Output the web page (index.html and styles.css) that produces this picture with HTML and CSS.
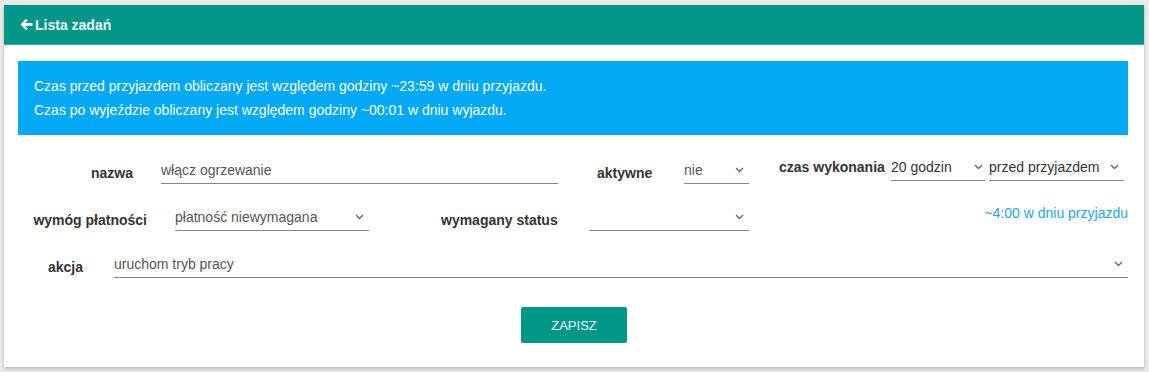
FILE: index.html
```html
<!DOCTYPE html>
<html lang="pl">
<head>
    <meta charset="UTF-8">
    <title>Lista zadań - edycja</title>
    <meta name="viewport" content="width=device-width, initial-scale=1.0">
    <link rel="stylesheet" href="styles.css">
</head>
<body>
    <div class="card">
        <div class="card-head">
            <svg class="back-icon" width="13" height="13" viewBox="0 0 14 14">
                <path d="M6.4 0.8 L8.3 2.7 L5.6 5.4 H13.4 V8.6 H5.6 L8.3 11.3 L6.4 13.2 L0.6 7 Z" fill="currentColor"/>
            </svg>
            <span>Lista zadań</span>
        </div>
        <div class="card-body">
            <div class="info">
                <p>Czas przed przyjazdem obliczany jest względem godziny ~23:59 w dniu przyjazdu.</p>
                <p>Czas po wyjeździe obliczany jest względem godziny ~00:01 w dniu wyjazdu.</p>
            </div>

            <form class="task-form">
                <div class="row row-first">
                    <div class="field f-name">
                        <label class="label lbl-name">nazwa</label>
                        <div class="input">włącz ogrzewanie</div>
                    </div>
                    <div class="field f-active">
                        <label class="label">aktywne</label>
                        <div class="select sel-active">
                            <span>nie</span>
                            <svg class="chev" width="9" height="6" viewBox="0 0 9 6"><path d="M1 1 L4.5 4.5 L8 1" fill="none" stroke="currentColor" stroke-width="1.4"/></svg>
                        </div>
                    </div>
                    <div class="field f-time">
                        <label class="label label-tall">czas wykonania</label>
                        <div class="select sel-hours dark">
                            <span>20 godzin</span>
                            <svg class="chev" width="9" height="6" viewBox="0 0 9 6"><path d="M1 1 L4.5 4.5 L8 1" fill="none" stroke="currentColor" stroke-width="1.4"/></svg>
                        </div>
                        <div class="select sel-when dark">
                            <span>przed przyjazdem</span>
                            <svg class="chev" width="9" height="6" viewBox="0 0 9 6"><path d="M1 1 L4.5 4.5 L8 1" fill="none" stroke="currentColor" stroke-width="1.4"/></svg>
                        </div>
                    </div>
                </div>

                <div class="row">
                    <div class="field">
                        <label class="label lbl-pay">wymóg płatności</label>
                        <div class="select sel-pay">
                            <span>płatność niewymagana</span>
                            <svg class="chev" width="9" height="6" viewBox="0 0 9 6"><path d="M1 1 L4.5 4.5 L8 1" fill="none" stroke="currentColor" stroke-width="1.4"/></svg>
                        </div>
                    </div>
                    <div class="field f-status">
                        <label class="label lbl-status">wymagany status</label>
                        <div class="select sel-status">
                            <span></span>
                            <svg class="chev" width="9" height="6" viewBox="0 0 9 6"><path d="M1 1 L4.5 4.5 L8 1" fill="none" stroke="currentColor" stroke-width="1.4"/></svg>
                        </div>
                    </div>
                    <div class="hint">~4:00 w dniu przyjazdu</div>
                </div>

                <div class="row">
                    <div class="field f-action">
                        <label class="label lbl-action">akcja</label>
                        <div class="select sel-action">
                            <span>uruchom tryb pracy</span>
                            <svg class="chev" width="9" height="6" viewBox="0 0 9 6"><path d="M1 1 L4.5 4.5 L8 1" fill="none" stroke="currentColor" stroke-width="1.4"/></svg>
                        </div>
                    </div>
                </div>

                <button type="submit" class="save-btn">ZAPISZ</button>
            </form>
        </div>
    </div>
</body>
</html>
```

FILE: styles.css
```css
body {
    margin: 0;
    padding: 5px 5px 5px 4px;
    background: #e9e9e9;
    font-family: 'Liberation Sans', Arial, sans-serif;
    font-size: 14px;
    color: #333;
}
.card {
    width: 1140px;
    background: #fff;
    box-shadow: 0 2px 3px rgba(0,0,0,0.18), 0 0 2px rgba(0,0,0,0.08);
    padding-bottom: 24px;
}
.card-head {
    height: 39px;
    background: #009688;
    border-bottom: 1px solid #3a9cc4;
    display: flex;
    align-items: center;
    gap: 2px;
    padding-left: 16px;
    color: #f2fbf9;
    font-weight: bold;
}
.back-icon {
    display: block;
}
.card-body {
    padding: 16px 16px 0 14px;
}
.info {
    background: #03a9f4;
    color: #fff;
    padding: 13px 16px;
    line-height: 24px;
}
.info p {
    margin: 0;
}
.task-form {
    margin-top: 18px;
}
.row {
    display: flex;
    align-items: flex-start;
    margin-top: 19px;
}
.row-first {
    margin-top: 0;
}
.field {
    display: flex;
    align-items: flex-start;
}
.label {
    font-weight: bold;
    color: #333;
    line-height: 20px;
    margin-top: 7px;
    white-space: nowrap;
}
.label-tall {
    line-height: 28px;
    margin-top: 0;
}
.input, .select {
    height: 28px;
    box-sizing: border-box;
    border-bottom: 1px solid #858585;
    display: flex;
    align-items: center;
    color: #555;
    white-space: nowrap;
}
.select {
    justify-content: space-between;
    padding-right: 5px;
}
.select.dark {
    color: #333;
}
.chev {
    color: #666;
    flex-shrink: 0;
}

/* row 1 */
.f-name, .f-active {
    margin-top: 3px;
}
.lbl-name {
    width: 115px;
    text-align: right;
    margin-right: 28px;
}
.input {
    width: 397px;
}
.f-active {
    margin-left: 39px;
}
.f-active .label {
    width: 56px;
    margin-right: 31px;
}
.sel-active {
    width: 65px;
}
.f-time {
    margin-left: 30px;
}
.f-time .label {
    width: 107px;
    margin-right: 5px;
}
.sel-hours {
    width: 94px;
    margin-right: 4px;
    padding-right: 2px;
}
.sel-when {
    width: 135px;
}

/* row 2 */
.lbl-pay {
    width: 129px;
    text-align: right;
    margin-right: 28px;
}
.sel-pay {
    width: 194px;
}
.f-status {
    margin-left: 72px;
}
.lbl-status {
    width: 118px;
    margin-right: 30px;
}
.sel-status {
    width: 160px;
}
.hint {
    margin-left: auto;
    color: #1ea4ec;
    line-height: 20px;
}

/* row 3 */
.f-action {
    flex: 1;
}
.lbl-action {
    width: 65px;
    text-align: right;
    margin-right: 31px;
}
.sel-action {
    flex: 1;
}

.save-btn {
    display: block;
    margin: 29px auto 0;
    width: 106px;
    height: 36px;
    background: #009688;
    color: #f2fbf9;
    border: none;
    border-radius: 2px;
    font-family: 'Liberation Sans', Arial, sans-serif;
    font-size: 13px;
    cursor: pointer;
    position: relative;
    left: 1px;
}
```
